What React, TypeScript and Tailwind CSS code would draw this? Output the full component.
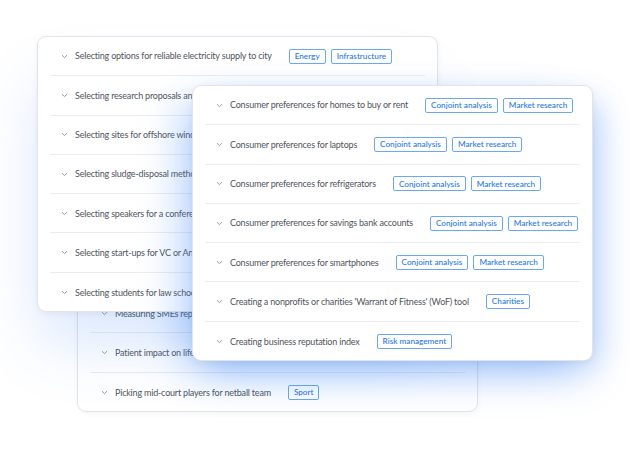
type Row = { title: string; tags: string[] };

const leftCard: Row[] = [
  { title: "Selecting options for reliable electricity supply to city", tags: ["Energy", "Infrastructure"] },
  { title: "Selecting research proposals and grant applications", tags: ["Research"] },
  { title: "Selecting sites for offshore wind farms", tags: ["Energy"] },
  { title: "Selecting sludge-disposal methods", tags: ["Environment"] },
  { title: "Selecting speakers for a conference", tags: ["Events"] },
  { title: "Selecting start-ups for VC or Angel investment", tags: ["Finance"] },
  { title: "Selecting students for law school", tags: ["Education"] },
];

const backCard: Row[] = [
  { title: "Measuring customer satisfaction", tags: ["Marketing"] },
  { title: "Measuring employee engagement", tags: ["HR"] },
  { title: "Measuring innovation capacity", tags: ["Strategy"] },
  { title: "Measuring project risk", tags: ["Risk management"] },
  { title: "Measuring SMEs reputation", tags: ["Risk management"] },
  { title: "Patient impact on life quality", tags: ["Health"] },
  { title: "Picking mid-court players for netball team", tags: ["Sport"] },
];

const frontCard: Row[] = [
  { title: "Consumer preferences for homes to buy or rent", tags: ["Conjoint analysis", "Market research"] },
  { title: "Consumer preferences for laptops", tags: ["Conjoint analysis", "Market research"] },
  { title: "Consumer preferences for refrigerators", tags: ["Conjoint analysis", "Market research"] },
  { title: "Consumer preferences for savings bank accounts", tags: ["Conjoint analysis", "Market research"] },
  { title: "Consumer preferences for smartphones", tags: ["Conjoint analysis", "Market research"] },
  { title: "Creating a nonprofits or charities 'Warrant of Fitness' (WoF) tool", tags: ["Charities"] },
  { title: "Creating business reputation index", tags: ["Risk management"] },
];

function Chevron() {
  return (
    <svg width="7" height="5" viewBox="0 0 7 5" className="shrink-0">
      <polyline points="1,1.2 3.5,3.6 6,1.2" fill="none" stroke="#8a8f98" strokeWidth="0.9" />
    </svg>
  );
}

function Card({ rows, className }: { rows: Row[]; className: string }) {
  return (
    <div className={`absolute flex h-[276px] w-[401px] flex-col overflow-hidden rounded-[9px] border border-[#e2e4e8] bg-white ${className}`}>
      {rows.map((r, i) => (
        <div
          key={r.title}
          className={`mx-3 flex h-[39.3px] shrink-0 items-center whitespace-nowrap pl-[11px] ${i < rows.length - 1 ? "border-b border-[#ebedf0]" : ""}`}
        >
          <Chevron />
          <span className="ml-[7px] text-[9px] tracking-[-0.2px] text-[#51555c]">{r.title}</span>
          <div className="ml-[17px] flex gap-[5px]">
            {r.tags.map((t) => (
              <span
                key={t}
                className="flex h-[15px] items-center rounded-[2px] border border-[#6aa8f2] px-[5px] text-[8.2px] font-medium text-[#1e78e6]"
              >
                {t}
              </span>
            ))}
          </div>
        </div>
      ))}
    </div>
  );
}

export default function App() {
  return (
    <div className="relative h-[450px] w-[630px] overflow-hidden bg-white font-['Lato',sans-serif]">
      <Card rows={backCard} className="left-[77px] top-[136px] shadow-[0_2px_6px_rgba(0,0,0,0.04)]" />
      <Card rows={leftCard} className="left-[37px] top-[36px] shadow-[-6px_40px_60px_-10px_rgba(59,130,246,0.2),0_2px_6px_rgba(0,0,0,0.05)]" />
      <Card rows={frontCard} className="left-[192px] top-[85px] shadow-[0_18px_40px_-4px_rgba(59,130,246,0.32),-24px_10px_40px_-10px_rgba(59,130,246,0.22),16px_10px_30px_-8px_rgba(59,130,246,0.2),0_2px_6px_rgba(0,0,0,0.05)]" />
    </div>
  );
}
